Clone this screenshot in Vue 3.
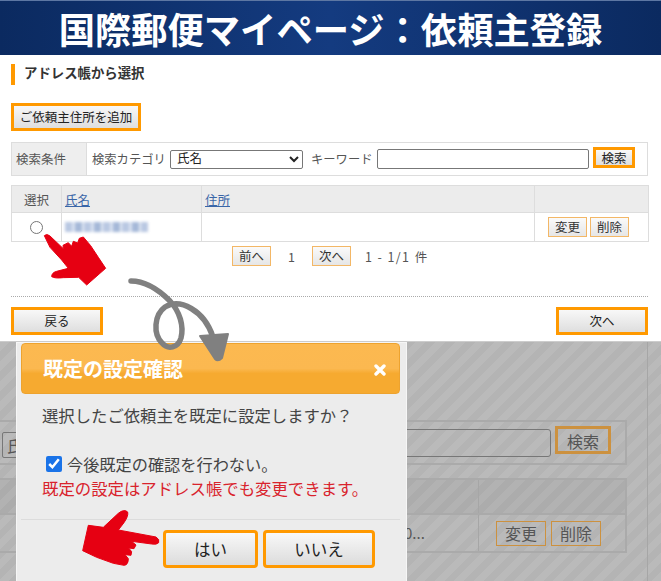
<script setup>
const rows = [{ id: 1 }]
</script>

<template>
  <div class="page">
    <header class="banner"><h1>国際郵便マイページ：依頼主登録</h1></header>

    <section class="main">
      <h2 class="heading">アドレス帳から選択</h2>
      <button class="btn add">ご依頼主住所を追加</button>

      <div class="search">
        <div class="search-label">検索条件</div>
        <div class="search-body">
          <span class="cat">検索カテゴリ</span>
          <select class="sel"><option>氏名</option></select>
          <span class="kw">キーワード</span>
          <input class="txt" type="text" />
          <button class="btn find">検索</button>
        </div>
      </div>

      <table class="list">
        <colgroup><col class="c1" /><col class="c2" /><col class="c3" /><col class="c4" /></colgroup>
        <thead>
          <tr><th>選択</th><th class="l"><a>氏名</a></th><th class="l"><a>住所</a></th><th></th></tr>
        </thead>
        <tbody>
          <tr v-for="r in rows" :key="r.id">
            <td class="center"><input class="radio" type="radio" name="who" /></td>
            <td class="l"><div class="blur"></div></td>
            <td></td>
            <td class="acts"><button class="mini">変更</button><button class="mini">削除</button></td>
          </tr>
        </tbody>
      </table>

      <div class="pager">
        <button class="mini p">前へ</button>
        <span class="num">1</span>
        <button class="mini p">次へ</button>
        <span class="count">1 - 1/1 件</span>
      </div>

      <div class="rule"></div>

      <div class="foot">
        <button class="btn nav">戻る</button>
        <button class="btn nav">次へ</button>
      </div>
    </section>

    <section class="shade">
      <div class="vline"></div>
      <div class="g-search">
        <span class="g-sel">氏</span>
        <div class="g-input"></div>
        <div class="g-find">検索</div>
      </div>
      <div class="g-table">
        <div class="g-head"><div class="g-a"></div><div class="g-b"></div></div>
        <div class="g-row">
          <div class="g-a"><span class="g-more">0...</span></div>
          <div class="g-b"><span class="g-mini">変更</span><span class="g-mini">削除</span></div>
        </div>
      </div>

      <div class="dialog">
        <div class="d-head">
          <span>既定の設定確認</span>
          <svg class="close" viewBox="0 0 12 12" width="12" height="12" aria-label="閉じる">
            <path d="M2 2 L10 10 M10 2 L2 10" stroke="#fff" stroke-width="3.4" stroke-linecap="round" fill="none" />
          </svg>
        </div>
        <p class="d-msg">選択したご依頼主を既定に設定しますか？</p>
        <label class="d-check"><input type="checkbox" checked /><span>今後既定の確認を行わない。</span></label>
        <p class="d-note">既定の設定はアドレス帳でも変更できます。</p>
        <div class="d-line"></div>
        <div class="d-btns">
          <button class="d-btn yes">はい</button>
          <button class="d-btn no">いいえ</button>
        </div>
      </div>
    </section>

    <svg class="marks" viewBox="0 0 661 581" width="661" height="581" aria-hidden="true">
      <g transform="translate(0 170) scale(.3333)">
        <path fill="#e60012" stroke="#e60012" stroke-width="3" stroke-linejoin="round"
          d="M133 197 Q140 190 150 198 L190 236 L189 226 L205 218 L215 229 L220 214 L233 219 L238 205 L250 201 L272 227 L295 262 L317 295 L260 345 L236 322 L190 323 Q165 326 155 320 Q155 308 170 304 L205 295 L185 270 L150 232 Z" />
      </g>
      <g transform="translate(0 450) scale(.3333)">
        <path fill="#e60012" stroke="#e60012" stroke-width="3" stroke-linejoin="round"
          d="M265 226 L310 232 L355 190 Q372 176 383 186 Q386 198 372 218 L355 240 L468 261 Q480 268 476 278 Q470 285 455 282 L395 274 L408 285 L402 296 L386 294 L395 305 L393 316 L375 314 L385 326 Q385 345 372 346 L340 340 L290 322 L248 302 Z" />
      </g>
      <path fill="none" stroke="#808080" stroke-width="5.5" stroke-linecap="round"
        d="M131 281 C146 281 160 291 170 301 C180 312 184 326 181 338 C178 348 168 350 162 343 C153 334 154 315 165 307 C180 298 204 310 213 337" />
      <path fill="#808080" stroke="#808080" stroke-width="2" stroke-linejoin="round" d="M200 336 L228 334 L222 358 Q218 362 215 359 Z" />
    </svg>
  </div>
</template>

<style>
body { margin: 0; }
</style>

<style scoped>
.page {
  position: relative;
  width: 661px;
  height: 581px;
  overflow: hidden;
  background: #fff;
  font-family: "Noto Sans CJK JP", "Liberation Sans", sans-serif;
  color: #333;
}
button, select, input { font-family: inherit; margin: 0; box-sizing: border-box; }

.banner {
  height: 55px;
  box-sizing: border-box;
  border-top: 1px solid #5d77a3;
  background: linear-gradient(90deg, #0b2a60 0%, #143b80 50%, #0b2a60 100%);
  display: flex;
  align-items: center;
  justify-content: center;
}
.banner h1 {
  margin: 0;
  color: #fff;
  font-size: 36.3px;
  line-height: 54px;
  font-weight: 700;
  white-space: nowrap;
}

.main { padding: 9px 13px 6px 11px; height: 286px; box-sizing: border-box; }
.heading {
  margin: 0;
  height: 21px;
  box-sizing: border-box;
  border-left: 4px solid #f90;
  padding-left: 9px;
  font-size: 13.4px;
  line-height: 17px;
  font-weight: 700;
  color: #333;
}
.btn {
  border: 3px solid #f90;
  background: linear-gradient(#f8f8f8, #dedede);
  color: #222;
  padding: 0;
  height: 28px;
  font-size: 12.5px;
  line-height: 20px;
}
.add { display: block; margin-top: 18px; width: 130px; }

.search {
  margin-top: 11px;
  height: 34px;
  box-sizing: border-box;
  border: 1px solid #ddd;
  display: flex;
}
.search-label {
  width: 75px;
  background: #eee;
  border-right: 1px solid #ddd;
  font-size: 12.5px;
  line-height: 32px;
  padding-left: 4px;
  box-sizing: border-box;
  color: #555;
}
.search-body { flex: 1; display: flex; align-items: center; font-size: 12.3px; color: #555; padding-left: 5px; }
.cat { width: 78px; }
.sel { width: 133px; height: 19px; font-family: "Liberation Sans", "Noto Sans CJK JP", sans-serif; font-size: 12.5px; padding: 0 0 0 2px; color: #222; background: #fff; border: 1px solid #777; border-radius: 2px; }
.kw { margin-left: 8px; width: 66px; }
.txt { width: 212px; height: 20px; border: 1px solid #777; border-radius: 2px; background: #fff; }
.find { margin-left: 4px; margin-top: -4px; width: 42px; height: 21px; font-size: 12.5px; line-height: 15px; }

.list { margin-top: 9px; width: 637px; border-collapse: collapse; table-layout: fixed; font-size: 12.5px; }
.c1 { width: 50px; } .c2 { width: 140px; } .c3 { width: 333px; } .c4 { width: 114px; }
.list th, .list td { border: 1px solid #ddd; padding: 0; }
.list th { height: 26px; background: #ececec; font-weight: 400; color: #555; }
.list td { height: 28px; }
.l { text-align: left; padding-left: 3px !important; }
.list a { color: #3a66a8; text-decoration: underline; }
.center { text-align: center; }
.radio { width: 13px; height: 13px; margin: 5px 0 0 0; display: inline-block; }
.blur {
  width: 83px;
  height: 10px;
  filter: blur(1.6px);
  background: repeating-linear-gradient(90deg, #b9c8e2 0 7px, #dbe3f1 7px 10px, #a5b8d8 10px 17px, #e6ebf5 17px 19px);
}
.acts { text-align: right; padding-right: 19px !important; white-space: nowrap; }
.mini {
  width: 39px;
  height: 20px;
  padding: 0;
  border: 1px solid #f3b766;
  background: linear-gradient(#fafafa, #e6e6e6);
  font-size: 12.5px;
  line-height: 16px;
  color: #333;
}
.acts .mini + .mini { margin-left: 3px; }

.pager { margin-top: 4px; height: 20px; padding-left: 221px; display: flex; align-items: center; font-size: 12.5px; color: #555; }
.num { width: 41px; text-align: center; }
.count { margin-left: 14px; letter-spacing: 1.4px; }

.rule { margin-top: 30px; border-top: 1px dotted #aaa; }

.foot { margin-top: 10px; display: flex; justify-content: space-between; }
.nav { width: 92px; }

.shade {
  position: relative;
  height: 240px;
  box-sizing: border-box;
  border-top: 1px solid #ccc;
  padding-top: 78px;
  background: repeating-linear-gradient(135deg, #bababa 0 7px, #b4b4b4 7px 14px);
  color: #555;
}
.vline { position: absolute; left: 647px; top: 0; bottom: 0; width: 1px; background: #a6a6a6; }
.g-search {
  width: 627px;
  height: 45px;
  box-sizing: border-box;
  border: 2px solid #aaa;
  border-left: 0;
  display: flex;
  align-items: center;
  position: relative;
}
.g-sel {
  position: absolute;
  left: 2px;
  top: 10px;
  height: 26px;
  width: 30px;
  box-sizing: border-box;
  border: 1px solid #777;
  border-radius: 2px;
  padding-left: 4px;
  font-size: 16px;
  line-height: 24px;
}
.g-input {
  margin-left: 20px;
  width: 531px;
  height: 28px;
  box-sizing: border-box;
  border: 1px solid #777;
  border-radius: 3px;
}
.g-find {
  margin-left: 4px;
  margin-top: -6px;
  width: 56px;
  height: 28px;
  box-sizing: border-box;
  border: 3px solid #cc913f;
  text-align: center;
  font-size: 16px;
  line-height: 24px;
}
.g-table { margin-top: 13px; width: 627px; box-sizing: border-box; border: 2px solid #aaa; border-left: 0; }
.g-head, .g-row { display: flex; }
.g-head { height: 33px; background: #0000000a; border-bottom: 2px solid #aaa; }
.g-row { height: 36px; }
.g-a { width: 479px; box-sizing: border-box; border-right: 1px solid #a6a6a6; position: relative; }
.g-b { flex: 1; display: flex; align-items: center; padding-left: 17px; gap: 5px; }
.g-more { position: absolute; left: 404px; top: 8px; font-size: 15px; line-height: 20px; }
.g-mini {
  width: 50px;
  height: 25px;
  box-sizing: border-box;
  border: 1px solid #cc913f;
  text-align: center;
  font-size: 16px;
  line-height: 23px;
}

.dialog {
  position: absolute;
  left: 17px;
  top: 1px;
  width: 389px;
  height: 239px;
  background: #ececec;
  box-shadow: 0 0 0 1px #f6f6f6;
  color: #444;
}
.d-head {
  margin: 0 6px 0 4px;
  height: 51px;
  box-sizing: border-box;
  border: 1px solid #eda32f;
  border-radius: 4px;
  background: linear-gradient(#fcb950 0, #fbb850 50%, #f6aa30 60%, #f6aa30 100%);
  color: #fff;
  font-size: 20px;
  font-weight: 700;
  line-height: 46px;
  padding: 0 13px 0 21px;
  display: flex;
  justify-content: space-between;
  align-items: center;
}
.close { margin-top: 2px; }
.d-msg { margin: 9px 0 0 25px; font-size: 16.35px; line-height: 24px; white-space: nowrap; }
.d-check { display: flex; align-items: center; margin: 25px 0 0 29px; height: 24px; font-size: 16.2px; white-space: nowrap; }
.d-check input { width: 16px; height: 16px; margin: 0 5px 0 0; accent-color: #1a73e8; }
.d-note { margin: 0 0 0 25px; font-size: 16.4px; line-height: 24px; color: #d9232c; white-space: nowrap; }
.d-line { margin: 19px 6px 0 4px; border-top: 1px solid #dcdcdc; }
.d-btns { margin: 10px 0 0 146px; display: flex; gap: 5px; }
.d-btn {
  height: 38px;
  padding: 0;
  border: 3px solid #f90;
  border-radius: 4px;
  background: linear-gradient(#f8f8f8, #dcdcdc);
  color: #222;
  font-size: 16.5px;
  line-height: 28px;
}
.yes { width: 95px; }
.no { width: 112px; }

.marks { position: absolute; left: 0; top: 0; pointer-events: none; }
</style>
